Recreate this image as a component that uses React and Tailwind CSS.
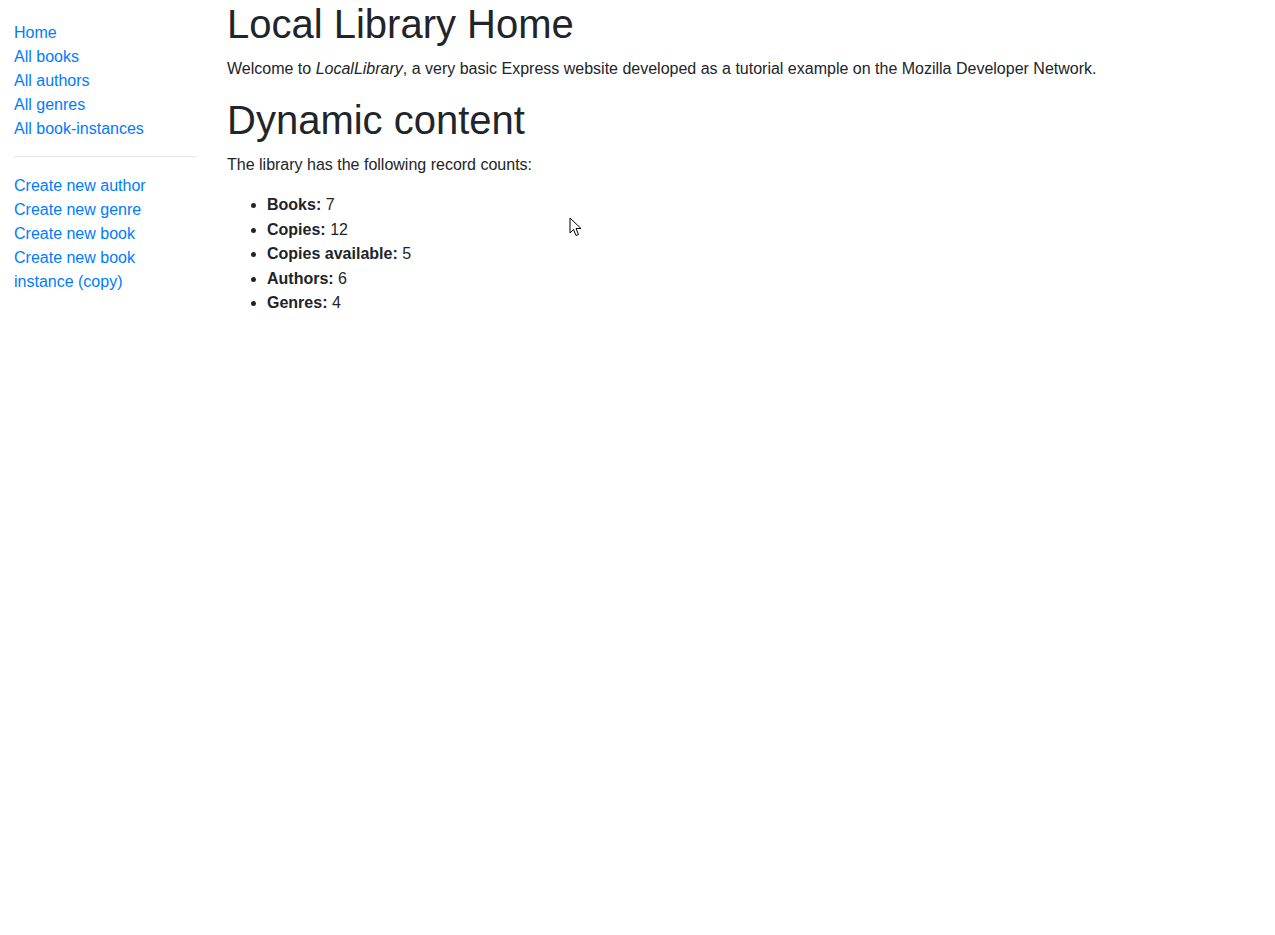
const sideLinks = [
  "Home",
  "All books",
  "All authors",
  "All genres",
  "All book-instances",
];

const createLinks = [
  "Create new author",
  "Create new genre",
  "Create new book",
  "Create new book instance (copy)",
];

const counts = [
  ["Books:", 7],
  ["Copies:", 12],
  ["Copies available:", 5],
  ["Authors:", 6],
  ["Genres:", 4],
];

const Cursor = () => (
  <svg
    className="absolute left-[569px] top-[217px] pointer-events-none"
    width="14"
    height="21"
    viewBox="0 0 14 21"
  >
    <path
      d="M1 1 L1 16 L4.5 12.5 L7 18.5 L9.5 17.5 L7 11.5 L12 11.5 Z"
      fill="#fff"
      stroke="#000"
      strokeWidth="1"
      strokeLinejoin="round"
    />
  </svg>
);

export default function App() {
  return (
    <div
      className="relative min-h-[935px] bg-white text-[#212529] text-base leading-6"
      style={{ fontFamily: '"Liberation Sans", Arial, sans-serif' }}
    >
      <div className="flex">
        <div className="w-[212px] pl-[14px] pr-[15px] shrink-0">
          <ul className="mt-[21px] mb-4 list-none p-0">
            {sideLinks.map((l) => (
              <li key={l}>
                <a href="#" className="text-[#007bff] hover:underline">
                  {l}
                </a>
              </li>
            ))}
            <li>
              <hr className="mt-[15px] mb-[17px] border-0 border-t border-[rgba(0,0,0,0.1)]" />
            </li>
            {createLinks.map((l) => (
              <li key={l}>
                <a href="#" className="text-[#007bff] hover:underline">
                  {l}
                </a>
              </li>
            ))}
          </ul>
        </div>
        <div className="flex-1 pl-[15px] pr-[15px]">
          <h1 className="text-[40px] leading-[1.2] font-medium mb-2">
            Local Library Home
          </h1>
          <p className="pt-px mb-[15px]">
            Welcome to <em>LocalLibrary</em>, a very basic Express website
            developed as a tutorial example on the Mozilla Developer Network.
          </p>
          <h1 className="text-[40px] leading-[1.2] font-medium mb-2">
            Dynamic content
          </h1>
          <p className="pt-px mb-[15px]">
            The library has the following record counts:
          </p>
          <ul className="list-disc pl-10 pt-px mb-4 leading-[24.5px]">
            {counts.map(([label, n]) => (
              <li key={label}>
                <strong className="font-bold">{label}</strong> {n}
              </li>
            ))}
          </ul>
        </div>
      </div>
      <Cursor />
    </div>
  );
}
